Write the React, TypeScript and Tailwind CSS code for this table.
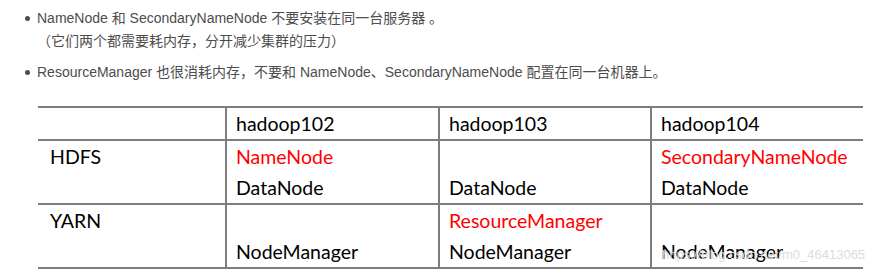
const rows = [
  {
    head: 'HDFS',
    cells: [
      [{ t: 'NameNode', red: true }, { t: 'DataNode' }],
      [{ t: '' }, { t: 'DataNode' }],
      [{ t: 'SecondaryNameNode', red: true }, { t: 'DataNode' }],
    ],
  },
  {
    head: 'YARN',
    cells: [
      [{ t: '' }, { t: 'NodeManager' }],
      [{ t: 'ResourceManager', red: true }, { t: 'NodeManager' }],
      [{ t: '' }, { t: 'NodeManager' }],
    ],
  },
];

export default function App() {
  return (
    <div className="relative h-[280px] w-[876px] overflow-hidden bg-white">
      {/* 说明列表 */}
      <ul className="pl-[25px] pt-[7px] text-[14px] text-[#4d4d4d] [font-family:'Liberation_Sans','Noto_Sans_CJK_SC',sans-serif]">
        <li className="flex leading-[23px]">
          <span className="mr-[7px] mt-[9px] h-[5px] w-[5px] shrink-0 rounded-full bg-[#4d4d4d]" />
          <div>
            <p>NameNode 和 SecondaryNameNode 不要安装在同一台服务器 。</p>
            <p>（它们两个都需要耗内存，分开减少集群的压力）</p>
          </div>
        </li>
        <li className="mt-[8px] flex leading-[23px]">
          <span className="mr-[7px] mt-[9px] h-[5px] w-[5px] shrink-0 rounded-full bg-[#4d4d4d]" />
          <p>ResourceManager 也很消耗内存，不要和 NameNode、SecondaryNameNode 配置在同一台机器上。</p>
        </li>
      </ul>

      {/* 集群规划表 */}
      <div className="ml-[38px] mt-[22px] grid w-[825px] grid-cols-[187px_213px_212px_213px] border-t-2 border-[#7d7d7d] text-[19.5px] text-black [font-family:'Lato','Noto_Sans_CJK_SC',sans-serif]">
        <div className="border-b-2 border-[#7d7d7d] leading-[31px]" />
        {['hadoop102', 'hadoop103', 'hadoop104'].map((h) => (
          <div key={h} className="border-b-2 border-l-2 border-[#7d7d7d] pl-[9px] leading-[31px]">
            {h}
          </div>
        ))}
        {rows.map((r) => (
          <>
            <div key={r.head} className="border-b-2 border-[#7d7d7d] pl-[12px] leading-[31px]">
              {r.head}
            </div>
            {r.cells.map((c, i) => (
              <div key={r.head + i} className="border-b-2 border-l-2 border-[#7d7d7d] pl-[9px] leading-[31px]">
                {c.map((line, j) => (
                  <div key={j} className={`h-[31px] ${line.red ? 'text-[#ff0000]' : ''}`}>
                    {line.t}
                  </div>
                ))}
              </div>
            ))}
          </>
        ))}
      </div>

      {/* 水印 */}
      <span className="absolute left-[662px] top-[245px] text-[13px] text-[#dcdcdc] [font-family:'Liberation_Sans',sans-serif]">
        https://blog.csdn.net/m0_46413065
      </span>
    </div>
  );
}
